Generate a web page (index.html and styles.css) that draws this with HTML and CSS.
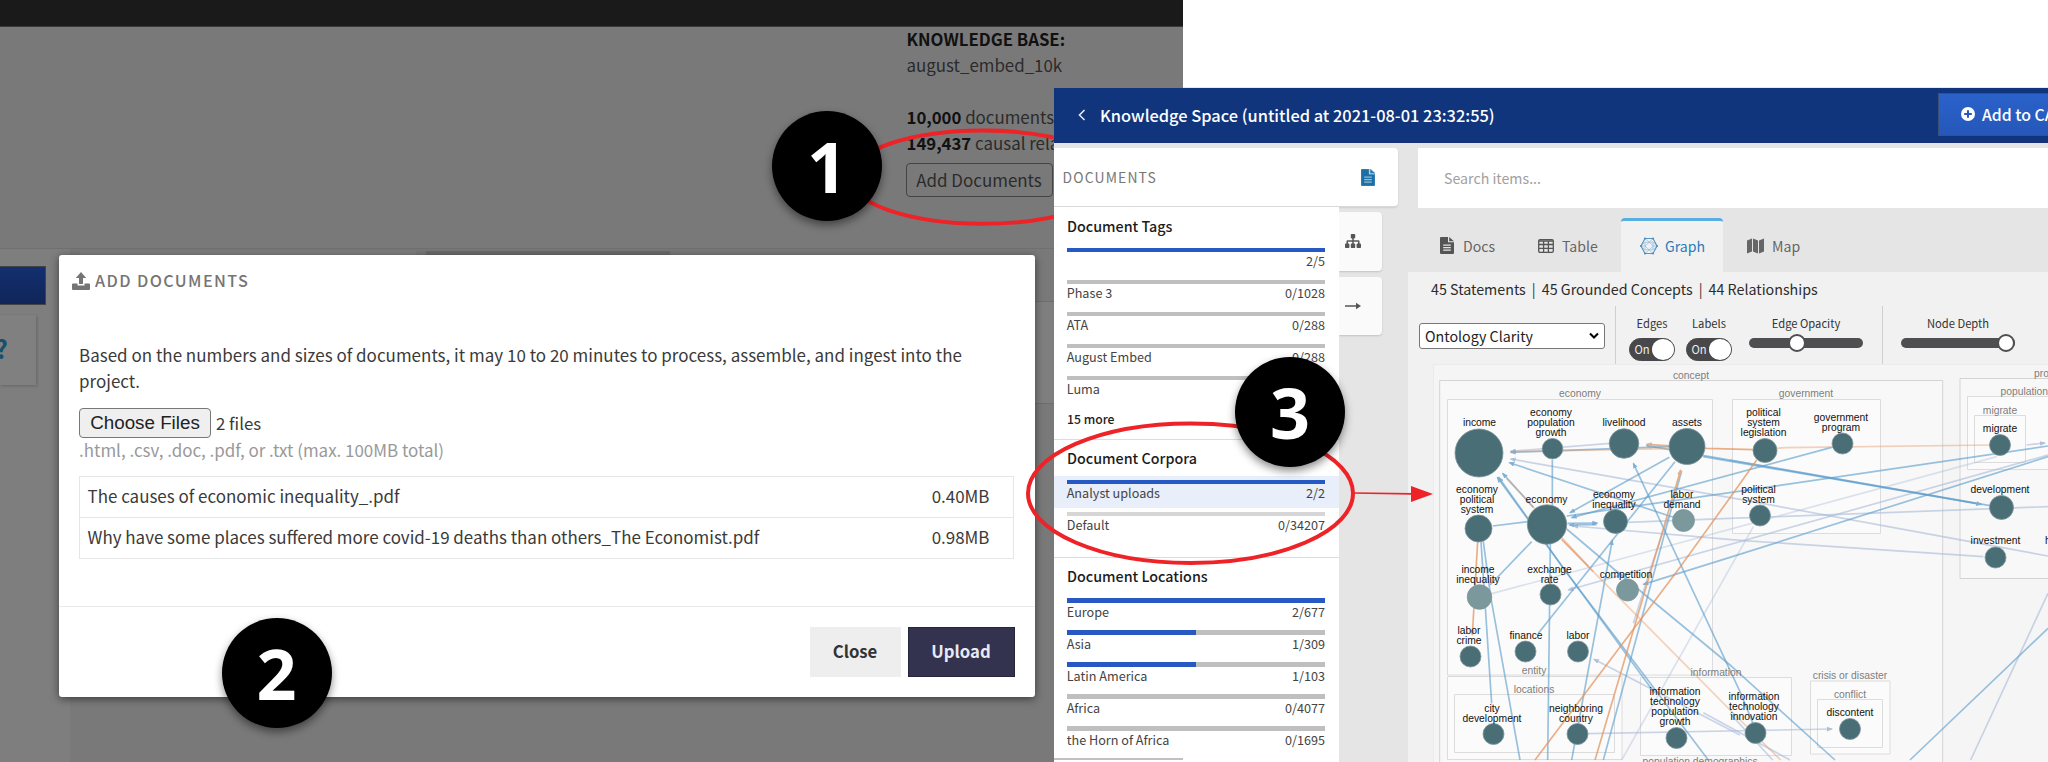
FILE: index.html
```html
<!DOCTYPE html>
<html lang="en">
<head>
<meta charset="utf-8">
<title>Add documents walkthrough</title>
<link rel="stylesheet" href="styles.css">
</head>
<body>
<div class="stage">

  <section class="project">
    <div class="topbar"></div>
    <div class="overview">
      <div class="kb">
        <div><b>KNOWLEDGE BASE:</b></div>
        <div>august_embed_10k</div>
        <div>&nbsp;</div>
        <div><b>10,000</b> documents</div>
        <div><b>149,437</b> causal relationships</div>
        <button class="outline-btn">Add Documents</button>
      </div>
    </div>
    <div class="lower">
      <div class="side">
        <div class="side-btn"></div>
        <div class="side-card"><span>?</span></div>
      </div>
      <div class="content">
        <div class="ptabs"><i class="ptab"></i><i class="ptab dark"></i></div>
        <div class="prow"></div>
      </div>
    </div>
  </section>

  <section class="modal">
    <header class="modal-head">
      <svg class="up" viewBox="0 0 18 18"><path d="M9 0l5.200 6H11v6H7V6H3.800z"/><path d="M1 11.500h4.500V13.500h7v-2H17q1 0 1 1V17q0 1-1 1H1q-1 0-1-1v-4.500q0-1 1-1z"/></svg>
      <h2>ADD DOCUMENTS</h2>
    </header>
    <div class="modal-body">
      <p>Based on the numbers and sizes of documents, it may 10 to 20 minutes to process, assemble, and ingest into the<br>project.</p>
      <div class="file"><button class="choose">Choose Files</button><span>2 files</span></div>
      <div class="hint">.html, .csv, .doc, .pdf, or .txt (max. 100MB total)</div>
      <div class="files">
        <div class="frow"><span>The causes of economic inequality_.pdf</span><span>0.40MB</span></div>
        <div class="frow"><span>Why have some places suffered more covid-19 deaths than others_The Economist.pdf</span><span>0.98MB</span></div>
      </div>
    </div>
    <footer class="modal-foot"><button class="close">Close</button><button class="upload">Upload</button></footer>
  </section>

  <svg class="mark" viewBox="0 0 2048 762"><ellipse cx="983" cy="177.200" rx="134" ry="46.600"/></svg>

  <section class="ks">
    <header class="ks-head">
      <svg class="chev" viewBox="0 0 8 12"><path d="M6.500 1L1.500 6l5 5"/></svg>
      <h1>Knowledge Space (untitled at 2021-08-01 23:32:55)</h1>
      <button class="cag"><svg viewBox="0 0 14 14"><circle cx="7" cy="7" r="7"/><path d="M7 3.200v7.600M3.200 7h7.600"/></svg>Add to CAG</button>
    </header>
    <div class="ks-body">
      <aside class="left">
        <div class="panel-title"><span>DOCUMENTS</span>
          <svg class="doc blue" viewBox="0 0 14 17"><path d="M1 0h7v5.200h6V16q0 1-1 1H1q-1 0-1-1V1q0-1 1-1z"/><path d="M9.200 0L14 4.200H9.200z"/><path class="ln" d="M3.200 8.200h7.600M3.200 10.700h7.600M3.200 13.200h7.600"/></svg>
        </div>
        <div class="left-row">
          <div class="facets">
            <section class="facet">
              <h3>Document Tags</h3>
              <div class="item"><div class="bar full"></div><div class="lab"><span></span><span>2/5</span></div></div>
              <div class="item"><div class="bar"></div><div class="lab"><span>Phase 3</span><span>0/1028</span></div></div>
              <div class="item"><div class="bar"></div><div class="lab"><span>ATA</span><span>0/288</span></div></div>
              <div class="item"><div class="bar"></div><div class="lab"><span>August Embed</span><span>0/288</span></div></div>
              <div class="item"><div class="bar"></div><div class="lab"><span>Luma</span><span></span></div></div>
              <div class="more">15 more</div>
            </section>
            <section class="facet">
              <h3>Document Corpora</h3>
              <div class="item sel"><div class="bar full"></div><div class="lab"><span>Analyst uploads</span><span>2/2</span></div></div>
              <div class="item"><div class="bar pale"></div><div class="lab"><span>Default</span><span>0/34207</span></div></div>
              <div class="tail"></div>
            </section>
            <section class="facet">
              <h3>Document Locations</h3>
              <div class="item"><div class="bar full"></div><div class="lab"><span>Europe</span><span>2/677</span></div></div>
              <div class="item"><div class="bar half"></div><div class="lab"><span>Asia</span><span>1/309</span></div></div>
              <div class="item"><div class="bar half"></div><div class="lab"><span>Latin America</span><span>1/103</span></div></div>
              <div class="item"><div class="bar"></div><div class="lab"><span>Africa</span><span>0/4077</span></div></div>
              <div class="item"><div class="bar"></div><div class="lab"><span>the Horn of Africa</span><span>0/1695</span></div></div>
            </section>
            <div class="scroll"></div>
          </div>
          <div class="rail">
            <div class="rail-btn"><svg viewBox="0 0 16 14"><rect x="5.800" y="0" width="4.400" height="4.400" rx=".8"/><rect x="0" y="9.600" width="4.400" height="4.400" rx=".8"/><rect x="5.800" y="9.600" width="4.400" height="4.400" rx=".8"/><rect x="11.600" y="9.600" width="4.400" height="4.400" rx=".8"/><path class="st" d="M8 4v6M2.200 10V7.500Q2.200 7 2.700 7h10.600q.5 0 .5.500V10"/></svg></div>
            <div class="rail-btn"><svg viewBox="0 0 16 14"><path class="st" d="M0 7h12"/><path d="M11 3.800L16 7l-5 3.200z"/></svg></div>
          </div>
        </div>
      </aside>

      <main class="main">
        <div class="search">Search items...</div>
        <nav class="tabs">
          <div class="tab t1"><svg class="doc" viewBox="0 0 14 17"><path d="M1 0h7v5.200h6V16q0 1-1 1H1q-1 0-1-1V1q0-1 1-1z"/><path d="M9.200 0L14 4.200H9.200z"/><path class="ln" d="M3.200 8.200h7.600M3.200 10.700h7.600M3.200 13.200h7.600"/></svg>Docs</div>
          <div class="tab t2"><svg class="tbl" viewBox="0 0 16 14"><rect x=".7" y=".7" width="14.600" height="12.600" rx="1.300"/><path d="M1 2h14M1 5.500h14M1 9.400h14M5.600 2v11M10.400 2v11"/></svg>Table</div>
          <div class="tab t3 active"><svg class="net" viewBox="0 0 18 18"><path class="hex" d="M5 1.500h8l4 7.500-4 7.500H5L1 9z"/><path d="M5 1.500L13.500 9M13 1.500L5 9l8 7.500M5 16.500L13.500 9M1 9h4M13.500 9H17M5 5.200h8v7.600H5zM1 9l4-3.800M1 9l4 3.800M17 9l-4-3.800M17 9l-4 3.800"/><path class="dots" d="M5 1.500h0M13 1.500h0M17 9h0M13 16.500h0M5 16.500h0M1 9h0"/></svg>Graph</div>
          <div class="tab t4"><svg class="map" viewBox="0 0 17 16"><path d="M0 2.600L5 .500V13.500L0 15.500z"/><path d="M6 .500l5 2V15.500l-5-2z"/><path d="M12 2.500L17 .400V13.400L12 15.500z"/></svg>Map</div>
        </nav>
        <div class="view">
          <div class="stats"><span>45 Statements</span><i>|</i><span>45 Grounded Concepts</span><i>|</i><span>44 Relationships</span></div>
          <div class="tools">
            <div class="select"><span>Ontology Clarity</span><svg viewBox="0 0 10 7"><path d="M1 1.500l4 4 4-4"/></svg></div>
            <div class="tool-group g1">
              <div class="ctl"><label>Edges</label><div class="toggle"><span>On</span><i></i></div></div>
              <div class="ctl"><label>Labels</label><div class="toggle"><span>On</span><i></i></div></div>
              <div class="ctl wide"><label>Edge Opacity</label><div class="slider"><i style="left:42%"></i></div></div>
            </div>
            <div class="tool-group g2">
              <div class="ctl wide"><label>Node Depth</label><div class="slider"><i style="left:92%"></i></div></div>
            </div>
          </div>
          <svg class="graph" viewBox="1433 364 615 398">
            <defs>
              <marker id="ab" markerUnits="userSpaceOnUse" markerWidth="20" markerHeight="16" refX="15" refY="8" orient="auto"><path d="M0 1L18 8L0 15z"/></marker>
              <marker id="al" markerUnits="userSpaceOnUse" markerWidth="20" markerHeight="16" refX="15" refY="8" orient="auto"><path d="M0 1L18 8L0 15z"/></marker>
              <marker id="ao" markerUnits="userSpaceOnUse" markerWidth="20" markerHeight="16" refX="15" refY="8" orient="auto"><path d="M0 1L18 8L0 15z"/></marker>
            </defs>
            <g class="boxes">
              <path class="b0" d="M1433 364H2060V780H1433z"/>
              <path class="b1" d="M1439.700 380.500H1942.700V780H1439.700z"/>
              <path class="b1" d="M1960 378.500H2060V578.500H1960z"/>
              <path class="b2" d="M1447.500 399.500H1712.500V675H1447.500z"/>
              <path class="b2" d="M1732.500 399.500H1880.500V533.500H1732.500z"/>
              <path class="b2" d="M1447.500 676.500H1622V759.500H1447.500z"/>
              <path class="b3" d="M1454.500 694.500H1614.500V752.500H1454.500z"/>
              <path class="b2" d="M1640.500 677.500H1791.500V755.500H1640.500z"/>
              <path class="b2" d="M1810.500 681H1890V754H1810.500z"/>
              <path class="b3" d="M1817.500 699.500H1882.500V747.500H1817.500z"/>
              <path class="b2" d="M1967.500 396.500H2060V469.500H1967.500z"/>
              <path class="b3" d="M1974.500 415.500H2025.500V462.500H1974.500z"/>
            </g>
            <g class="edges" transform="translate(1420 360) scale(.33333)">
              <g class="lav">
                <path d="M570 250L272 274" marker-end="url(#al)"/>
                <path d="M1884 588L1650 545L960 418L272 297" marker-end="url(#al)"/>
                <path d="M930 300L1684 433" marker-end="url(#al)"/>
                <path d="M1690 590L960 541L460 498" marker-end="url(#al)"/>
                <path d="M1884 440L930 475L622 487"/>
                <path class="faint" d="M1730 290L480 630L215 701"/>
                <path d="M1884 285L445 690" marker-end="url(#al)"/>
                <path class="faint" d="M1000 500L605 1200"/>
                <path d="M960 1125L690 985L522 898" marker-end="url(#al)"/>
                <path d="M503 1121L1236 1107" marker-end="url(#al)"/>
                <path d="M1884 700L1652 1200"/>
                <path d="M745 470L700 600L640 790"/>
                <path d="M850 1058L1110 1200"/>
                <path d="M930 1060L1058 1200"/>
                <path d="M1820 255L1875 249" marker-end="url(#al)"/>
              </g>
              <g class="blue">
                <path d="M748 260L272 277" marker-end="url(#ab)"/>
                <path d="M760 472L268 308" marker-end="url(#ab)"/>
                <path d="M340 442L248 340" marker-end="url(#ab)"/>
                <path d="M704 1000L232 352" marker-end="url(#ab)"/>
                <path d="M865 1200L430 625L236 352" marker-end="url(#ab)"/>
                <path d="M442 490L532 489" marker-end="url(#ab)"/>
                <path d="M530 494L448 495" marker-end="url(#ab)"/>
                <path d="M748 292L450 458" marker-end="url(#ab)"/>
                <path d="M765 305L355 820"/>
                <path d="M1005 1105L960 995L640 310" marker-end="url(#ab)"/>
                <path d="M785 332L550 1200"/>
                <path d="M1235 262L455 473" marker-end="url(#ab)"/>
                <path d="M1884 258L1060 379L440 468"/>
                <path d="M1710 437L680 257" marker-end="url(#ab)"/>
                <path d="M850 290L1684 433" marker-end="url(#ab)"/>
                <path d="M1884 290L930 592L670 673" marker-end="url(#ab)"/>
                <path d="M218 498L322 485"/>
                <path d="M397 300V437M391 553L383 1200"/>
                <path d="M335 545L210 675"/>
                <path d="M183 545L215 1030M190 545L212 710L300 1200"/>
                <path d="M440 507L585 630L930 915L1245 1200"/>
                <path d="M455 1200L577 540" marker-end="url(#ab)"/>
                <path d="M1884 805L1470 1200"/>
              </g>
              <g class="orange">
                <path d="M1010 300L930 413L780 622L345 1200"/>
                <path d="M525 1200L782 330" marker-end="url(#ao)"/>
                <path d="M1000 269L860 265L680 253" marker-end="url(#ao)"/>
                <path class="thin" d="M1000 269L1100 263L1710 255"/>
                <path class="thin" d="M745 266L272 275"/>
                <path d="M173 545L157 825" marker-end="url(#ao)"/>
                <path d="M425 538L520 635"/>
                <path class="thin" d="M520 635L945 1065L1082 1200M505 618L260 355"/>
              </g>
            </g>
            <g class="nodes">
              <circle cx="1479" cy="453" r="24"/><circle cx="1552.500" cy="448.700" r="10.300"/><circle cx="1624" cy="443.500" r="14.800"/><circle cx="1687" cy="446.500" r="18"/>
              <circle cx="1478.500" cy="528.500" r="13.500"/><circle cx="1547" cy="524.500" r="19.700"/><circle cx="1615.500" cy="521.500" r="12"/><circle class="dim" cx="1683.500" cy="520.500" r="11"/>
              <circle cx="1765" cy="450.500" r="12"/><circle cx="1842.500" cy="443.500" r="10.500"/><circle cx="1760" cy="515.500" r="10.500"/>
              <circle cx="2000" cy="445" r="10.500"/><circle cx="2001.500" cy="507.500" r="12"/><circle cx="1995.500" cy="557.500" r="10.500"/>
              <circle class="dim" cx="1479.500" cy="597" r="12.300"/><circle cx="1550.500" cy="594.500" r="10.500"/><circle class="dim" cx="1627.500" cy="590" r="11"/>
              <circle cx="1470.500" cy="656.500" r="10.500"/><circle cx="1525.500" cy="651.500" r="10.500"/><circle cx="1578" cy="651.500" r="10.500"/>
              <circle cx="1493.500" cy="734" r="10.500"/><circle cx="1577.500" cy="734" r="10.500"/><circle cx="1676.500" cy="738" r="10.500"/><circle cx="1755.500" cy="733" r="10.500"/><circle cx="1850" cy="729" r="10.500"/>
            </g>
            <g class="groups">
              <text x="1691" y="378.500">concept</text><text x="1580" y="397">economy</text><text x="1806" y="397">government</text>
              <text x="1534" y="674">entity</text><text x="1534" y="693">locations</text><text x="1716" y="676">information</text>
              <text x="1850" y="679">crisis or disaster</text><text x="1850" y="697.500">conflict</text><text x="1700" y="765">population demographics</text>
              <text class="l" x="2034" y="376.500">process</text><text class="l" x="2000.500" y="395">population</text><text x="2000" y="413.500">migrate</text>
            </g>
            <g class="labels">
              <text x="1479.500" y="425.500">income</text>
              <text><tspan x="1551" y="415.500">economy</tspan><tspan x="1551" y="425.500">population</tspan><tspan x="1551" y="435.500">growth</tspan></text>
              <text x="1624" y="425.500">livelihood</text><text x="1687" y="425.500">assets</text>
              <text><tspan x="1477" y="492.500">economy</tspan><tspan x="1477" y="502.500">political</tspan><tspan x="1477" y="512.500">system</tspan></text>
              <text x="1546.500" y="502.500">economy</text>
              <text><tspan x="1614" y="497.500">economy</tspan><tspan x="1614" y="507.500">inequality</tspan></text>
              <text><tspan x="1682" y="497.500">labor</tspan><tspan x="1682" y="507.500">demand</tspan></text>
              <text><tspan x="1763.500" y="415.500">political</tspan><tspan x="1763.500" y="425.500">system</tspan><tspan x="1763.500" y="435.500">legislation</tspan></text>
              <text><tspan x="1841" y="420.500">government</tspan><tspan x="1841" y="430.500">program</tspan></text>
              <text><tspan x="1758.500" y="492.500">political</tspan><tspan x="1758.500" y="502.500">system</tspan></text>
              <text x="2000" y="431.500">migrate</text><text x="2000" y="492.500">development</text><text x="1995.500" y="544">investment</text><text class="l" x="2045" y="544">health</text>
              <text><tspan x="1478" y="572.500">income</tspan><tspan x="1478" y="582.500">inequality</tspan></text>
              <text><tspan x="1549.500" y="572.500">exchange</tspan><tspan x="1549.500" y="582.500">rate</tspan></text>
              <text x="1626" y="577.500">competition</text>
              <text><tspan x="1469" y="634">labor</tspan><tspan x="1469" y="644">crime</tspan></text>
              <text x="1526" y="639">finance</text><text x="1578" y="639">labor</text>
              <text><tspan x="1492" y="711.500">city</tspan><tspan x="1492" y="721.500">development</tspan></text>
              <text><tspan x="1576" y="711.500">neighboring</tspan><tspan x="1576" y="721.500">country</tspan></text>
              <text><tspan x="1675" y="695">information</tspan><tspan x="1675" y="705">technology</tspan><tspan x="1675" y="715">population</tspan><tspan x="1675" y="725">growth</tspan></text>
              <text><tspan x="1754" y="699.500">information</tspan><tspan x="1754" y="709.500">technology</tspan><tspan x="1754" y="719.500">innovation</tspan></text>
              <text x="1850" y="716">discontent</text>
            </g>
          </svg>
        </div>
      </main>
    </div>
  </section>

  <svg class="mark" viewBox="0 0 2048 762">
    <ellipse cx="1190.500" cy="493.200" rx="162.500" ry="69.700"/>
    <path class="shaft" d="M1353 493L1412 493.800"/><path class="tip" d="M1411 486L1433 494L1411 502z"/>
  </svg>
  <div class="badge n1">1</div>
  <div class="badge n2">2</div>
  <div class="badge n3">3</div>
</div>
</body>
</html>
```
FILE: styles.css
```css
*{box-sizing:border-box}
body{margin:0;background:#fff;font-family:"Noto Sans CJK SC","Noto Sans",sans-serif;color:#333}
h1,h2,h3,p{margin:0}
button{margin:0;padding:0;border:0;font:inherit;color:inherit;text-align:center}
.stage{position:relative;width:2048px;height:762px;overflow:hidden}

/* dimmed project page */
.project{width:1182.500px;height:762px;background:#797979;display:flex;flex-direction:column;font-size:16.900px;line-height:26px;color:#2b2b2b}
.topbar{height:27px;background:#1a1a1a;border-bottom:1px solid #3a3a3a}
.overview{height:221px;padding-left:906.500px}
.kb{white-space:nowrap;margin-top:-1.500px}
.kb b{font-size:16.750px;color:#111}
.outline-btn{display:block;margin:7px 0 0 -1px;width:147px;height:34px;border:1.500px solid #444;border-radius:4px;background:none;font-size:16.940px;line-height:29px}
.lower{flex:1;display:flex;border-top:1px solid #707070}
.side{width:70px;background:#7e7e7e;padding-top:17px}
.side-btn{width:46px;height:39px;background:linear-gradient(#142f70,#102659);border:1px solid #444;border-left:0}
.side-card{width:36px;height:70px;margin-top:10px;background:#808080;box-shadow:1px 1px 3px rgba(0,0,0,.2);display:flex;align-items:center;overflow:hidden}
.side-card span{margin:-4px 0 0 -5px;font-size:25px;font-weight:700;color:#16506e}
.content{flex:1;display:flex;flex-direction:column}
.ptabs{display:flex;gap:10px;padding:2px 0 0 10px;height:52px}
.ptab{width:336px;background:#808080}
.ptab.dark{width:244px;background:#6b6b6b}
.prow{height:103px;background:#7f7f7f;border:1px solid #6d6d6d;border-width:1px 0}

/* upload dialog */
.modal{position:absolute;left:58.500px;top:254.500px;width:976.500px;height:442.500px;background:#fff;border-radius:3px;box-shadow:0 2px 8px rgba(0,0,0,.5);display:flex;flex-direction:column;font-size:16.970px;line-height:26px;color:#3a3a3a}
.modal-head{height:82.500px;padding:12.700px 0 0 13.500px;display:flex;gap:5px;color:#757575}
.modal-head h2{font-size:16.200px;font-weight:500;letter-spacing:1.400px;line-height:26px}
.up{width:18px;height:18px;margin-top:4.500px;fill:#757575}
.modal-body{flex:1;padding:5px 21px 0 20.500px}
.modal-body p{white-space:nowrap;letter-spacing:.02px}
.file{display:flex;align-items:center;gap:5px;height:30px;margin-top:14px;font-size:16.800px}
.choose{width:132px;height:30px;border:1.500px solid #777;border-radius:4px;background:#efefef;font:18.800px "Liberation Sans",Arial,sans-serif;color:#222}
.hint{color:#999;margin-top:-1px}
.files{margin-top:12.500px;border:1.500px solid #e6e6e6}
.frow{display:flex;justify-content:space-between;height:40.500px;padding:6.300px 23.500px 0 7.500px}
.frow + .frow{border-top:1.500px solid #e6e6e6;padding-top:5.800px}
.modal-foot{height:91.500px;border-top:1.500px solid #eaeaea;padding:20px 20.500px 0 0;display:flex;justify-content:flex-end;gap:7px;font-weight:700;font-size:16.700px}
.modal-foot button{padding-bottom:1.500px}
.close{width:91px;height:50px;background:#eee;color:#333}
.upload{width:107px;height:50px;background:#33334f;border:1px solid #25253f;color:#e9e9f4}

/* hand-drawn callouts */
.mark{position:absolute;left:0;top:0;width:2048px;height:762px;fill:none;stroke:#ed2328;stroke-width:4px}
.mark .shaft{stroke-width:1.700px}
.mark .tip{fill:#ed2328;stroke:none}
.badge{position:absolute;width:110px;height:110px;border-radius:50%;background:#000;color:#fff;font:700 70px/110px "Open Sans",sans-serif;text-align:center;box-shadow:0 4px 8px rgba(0,0,0,.45)}
.n1{left:772px;top:110.500px}
.n2{left:221.500px;top:618px}
.n3{left:1235px;top:357px}

/* knowledge space window */
.ks{position:absolute;isolation:isolate;left:1054px;top:88px;width:994px;height:674px;overflow:hidden;background:#e5e5e5;display:flex;flex-direction:column;box-shadow:0 0 1px #777}
.ks-head{flex:none;height:54.500px;background:#11357c;border-bottom:1px solid #1b2f77;display:flex;align-items:center;position:relative;color:#fff}
.chev{width:8px;height:12px;margin:0 14px 0 24px;fill:none;stroke:#dfe8fa;stroke-width:1.600px}
.ks-head h1{flex:1;font-size:16.390px;font-weight:500;line-height:26px}
.cag{flex:none;width:150px;height:43px;margin:0 -40px 0 0;padding:0 0 1px 22px;border:1.500px solid #3a5178;background:linear-gradient(#2a62ca,#2657b9);display:flex;align-items:center;gap:7px;white-space:nowrap;font-size:15.800px;font-weight:500}
.cag svg{flex:none;width:14px;height:14px;fill:#fff}
.cag path{stroke:#2657b9;stroke-width:2px}
.ks-body{flex:1;display:flex;gap:10px;padding-top:5.500px}
.left{width:343.500px;flex:none}
.panel-title{height:59px;background:#fff;border-radius:0 4px 4px 0;border-bottom:1px solid #d9d9d9;box-shadow:0 1px 2px rgba(0,0,0,.1);padding:0 22.500px 0 8.500px;display:flex;align-items:center;justify-content:space-between;color:#777;font-size:13.900px;letter-spacing:1.150px}
.doc{width:14px;height:17px;fill:#555;stroke:none}
.doc .ln{stroke:#e5e5e5;stroke-width:1.200px}
.doc.blue{fill:#1d70a6}
.left-row{display:flex}
.facets{width:284.500px;height:555px;background:#fff;overflow:hidden;display:flex;flex-direction:column;position:relative;z-index:1}
.facet{flex:none}
.facet + .facet{border-top:1px solid #ddd}
.facet h3{height:36.300px;padding:7px 13px 0;font-size:14.320px;font-weight:500;line-height:22px;color:#1c1c1c}
.facet:first-child h3{height:36.700px;padding-top:7.500px}
.item{height:32px;padding:4px 13.500px 0 12.700px;font-size:12.650px;color:#444}
.item.sel{background:#e8eefa}
.bar{height:4.500px;background:#bfbfbf}
.bar.full{background:#2759c4}
.bar.half{background:linear-gradient(90deg,#2759c4 50%,#bfbfbf 50%)}
.bar.pale{background:#d6d6d6}
.lab{display:flex;justify-content:space-between;line-height:17.500px}
.more{height:35px;padding:7.300px 13px;font-size:12.220px;font-weight:500;line-height:16px;color:#222}
.tail{height:17px}
.scroll{width:129px;height:2px;background:#c1c1c1;margin-top:4px}
.rail{padding-top:5px;display:flex;flex-direction:column;gap:6px}
.rail-btn{width:43.500px;height:58.500px;background:#fafafa;border-radius:0 4px 4px 0;box-shadow:0 1px 2px rgba(0,0,0,.15);padding:22px 0 0 6.500px}
.rail svg{display:block;width:16px;height:14px;fill:#555}
.rail .st{fill:none;stroke:#555;stroke-width:1.500px}

.main{flex:1;min-width:0}
.search{margin-left:10px;height:60px;background:#fff;padding-left:26.500px;font-size:14.190px;line-height:60.500px;color:#a0a0a0}
.tabs{display:flex;height:64px;padding-top:10px;color:#666;font-size:14.100px}
.tab{display:flex;align-items:center;padding-top:1px}
.t1{width:98.500px;padding-left:32.500px;gap:9px}
.t2{width:115px;padding-left:32px;gap:8px}
.t3{width:102px;padding-left:19px;gap:7px}
.t4{padding-left:24px;gap:8px}
.tab.active{background:#f1f1f1;color:#2b7bb9;border-top:3.500px solid #58ade2;border-radius:4px 4px 0 0;padding-top:0;padding-bottom:2px}
.tbl{width:16px;height:14px;fill:none;stroke:#555;stroke-width:1.300px}
.net{width:18px;height:18px;fill:none;stroke:#7fb4da;stroke-width:.6px}
.net .hex{stroke:#5b94bd;stroke-width:1.200px}
.net .dots{stroke:#4a8fc2;stroke-width:2.200px;stroke-linecap:round}
.map{width:17px;height:16px;fill:#666}
.view{background:#f1f1f1;height:490px}
.stats{display:flex;height:34px;padding-left:23.500px;font-size:14.270px;line-height:33px;color:#2c2c2c}
.stats i{width:16px;text-align:center;font-style:normal}
.tools{display:flex;height:58px}
.select{width:186px;height:25.500px;margin:17px 10px 0 11.500px;padding:0 5px 0 5px;background:#fff;border:1.300px solid #777;border-radius:3px;display:flex;align-items:center;justify-content:space-between;font-size:14.240px;color:#222;line-height:23px}
.select svg{width:10px;height:7px;fill:none;stroke:#000;stroke-width:2px}
.tool-group{display:flex;border-left:1.500px solid #cfcfcf;padding-top:8.500px;font-size:11.200px;line-height:16px;color:#333}
.g1{width:267px;padding-left:13px}
.g2{padding-left:18px}
.ctl{width:46px;margin-right:11px;display:flex;flex-direction:column;align-items:center}
.ctl.wide{width:114px;margin:0 0 0 6px;white-space:nowrap}
.g2 .ctl.wide{margin-left:0}
.toggle{width:46px;height:23px;margin-top:7.500px;border:1px solid #48484b;border-radius:12px;background:#48484b;display:flex;align-items:center;justify-content:space-between;padding-left:4.500px;color:#eee}
.toggle span{margin-top:-1px}
.toggle i{width:22px;height:21px;border-radius:50%;background:#fff}
.slider{position:relative;width:114px;height:9.500px;margin-top:7.500px;border-radius:5px;background:#4f4f52}
.slider i{position:absolute;top:-4.500px;width:18px;height:18px;margin-left:-9px;border:2px solid #4f4f52;border-radius:50%;background:#fff}

/* concept graph */
.graph{display:block;width:615px;height:398px;margin-left:25.500px;font-family:"Liberation Sans",Arial,sans-serif;font-size:10.300px}
.b0{fill:#f5f5f5;stroke:#e2e2e2}
.b1{fill:#f8f8f8;stroke:#d4d4d4}
.b2,.b3{fill:#fbfbfb;stroke:#dcdcdc}
.edges path{fill:none}
.edges g{fill:none;stroke-width:5px}
.lav{stroke:#a9bcd8;stroke-opacity:.62}
.lav .faint{stroke-opacity:.4}
.blue{stroke:#5b9dcc;stroke-opacity:.62}
.orange{stroke:#e49460;stroke-opacity:.75}
.orange .thin{stroke-opacity:.42}
marker path{stroke:none}
marker#ab path{fill:#7fb0d6}
marker#al path{fill:#b2bfd4}
marker#ao path{fill:#deb090}
.nodes circle{fill:#4a6e76;stroke:#7c9599;stroke-width:.8px}
.nodes .dim{fill:#7b989d}
.groups{fill:#7d7d7d;text-anchor:middle}
.labels{fill:#111;text-anchor:middle}
.l{text-anchor:start}
```
